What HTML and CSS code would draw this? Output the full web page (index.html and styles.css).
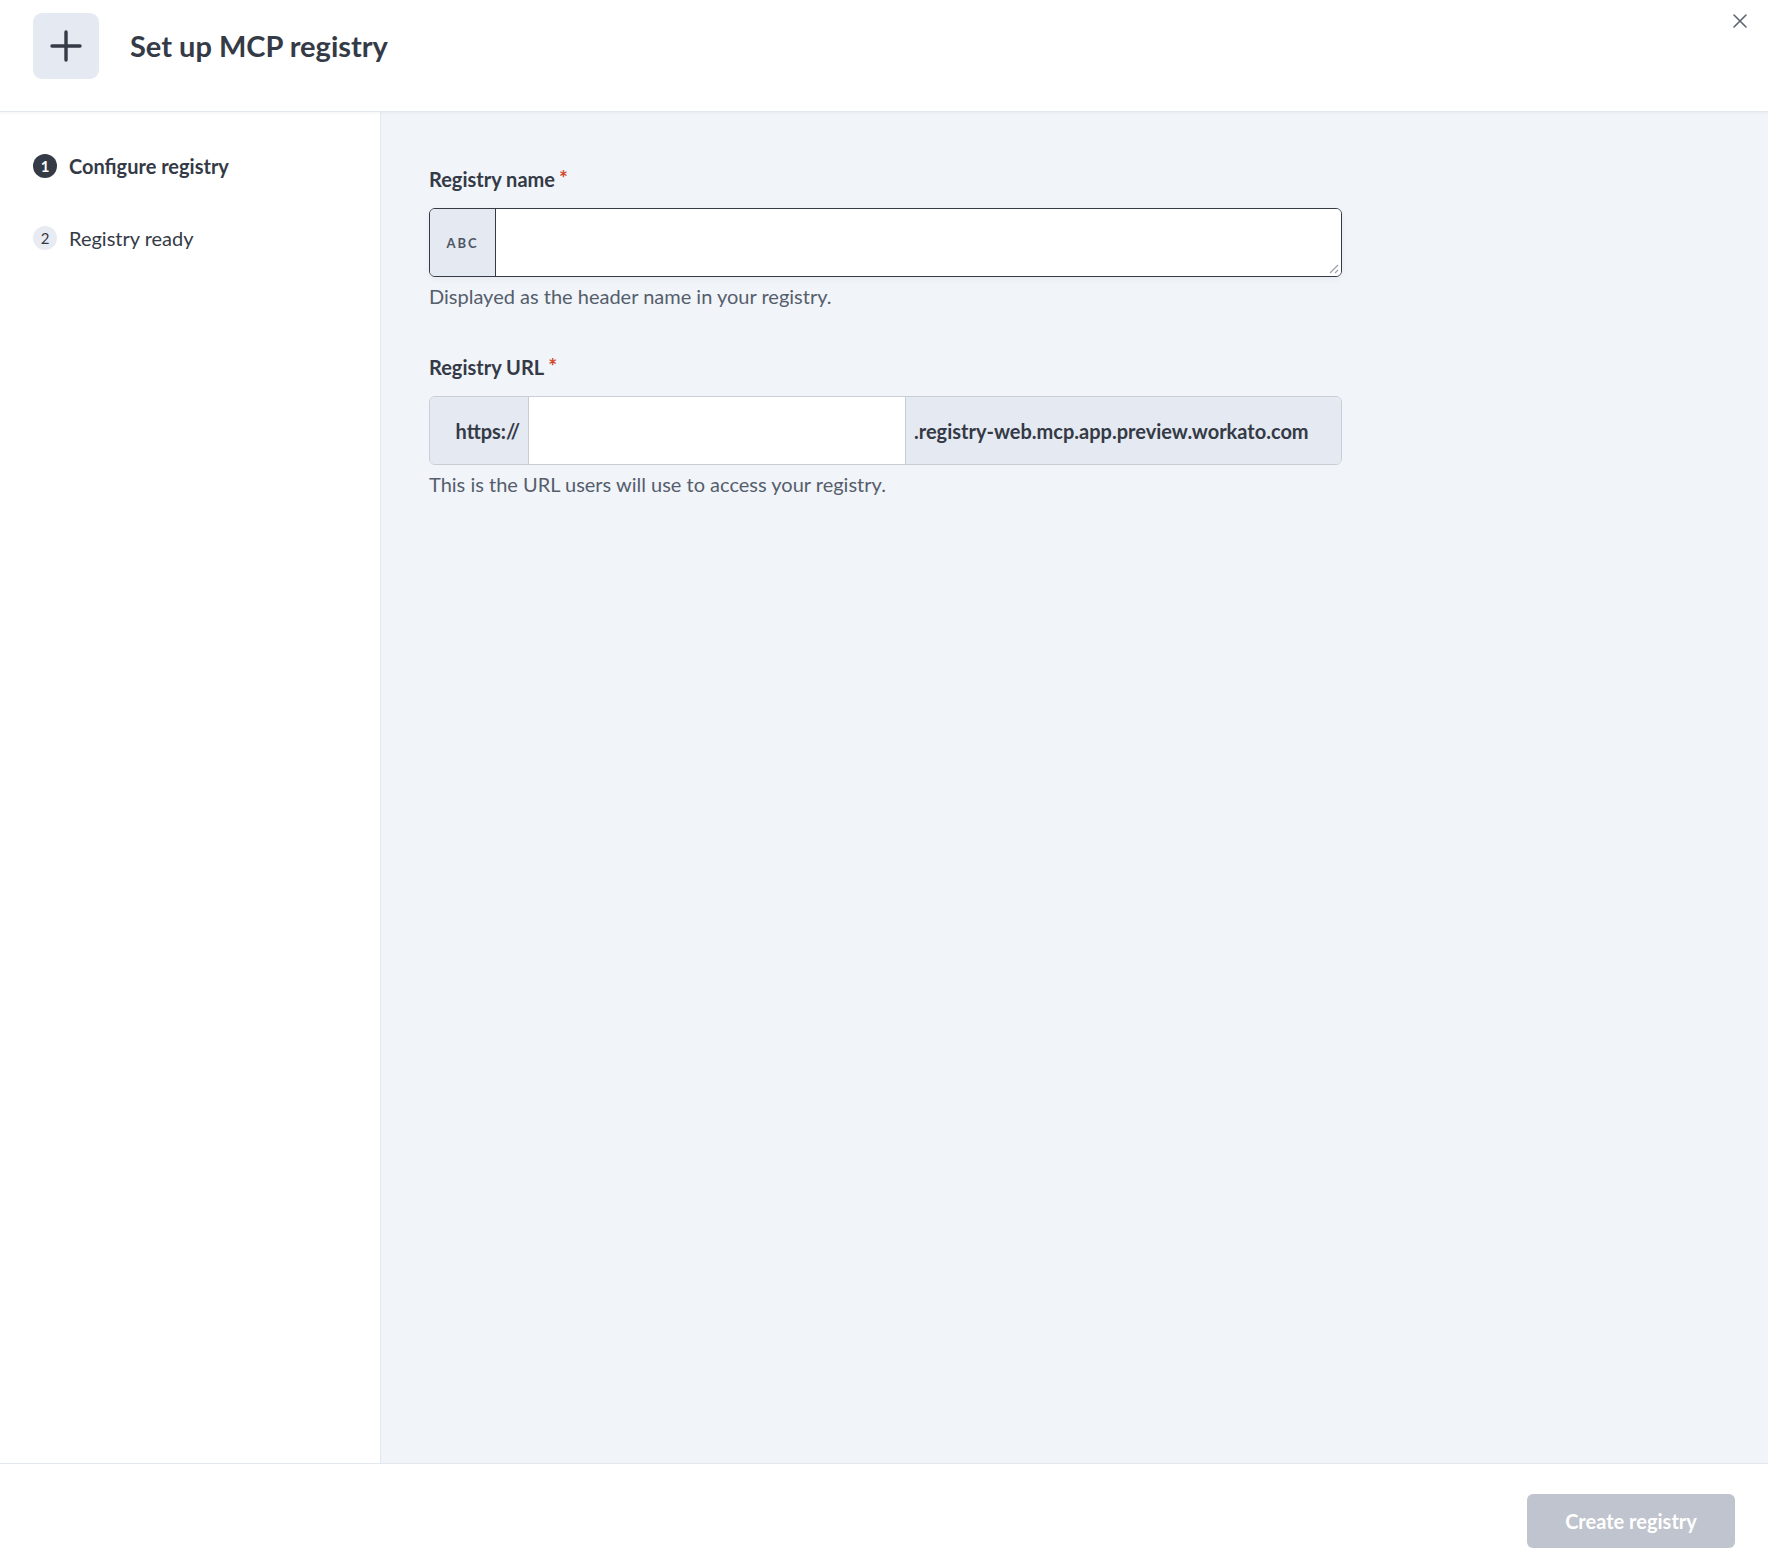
FILE: index.html
```html
<!DOCTYPE html>
<html>
<head>
<meta charset="utf-8">
<link rel="stylesheet" href="styles.css">
</head>
<body>
<div class="page">
  <header class="header">
    <div class="header-icon">
      <svg width="34" height="34" viewBox="0 0 34 34"><path d="M17 3V31M3 17H31" stroke="#343a46" stroke-width="3.4" stroke-linecap="round"/></svg>
    </div>
    <h1 class="title">Set up MCP registry</h1>
    <button class="close" aria-label="Close">
      <svg width="16" height="16" viewBox="0 0 16 16"><path d="M2 2L14 14M14 2L2 14" stroke="#5b6473" stroke-width="1.6" stroke-linecap="round"/></svg>
    </button>
  </header>
  <div class="body">
    <aside class="sidebar">
      <div class="step active"><span class="step-num">1</span><span class="step-label">Configure registry</span></div>
      <div class="step"><span class="step-num">2</span><span class="step-label">Registry ready</span></div>
    </aside>
    <main class="main">
      <div class="field">
        <label class="label">Registry name<span class="req">*</span></label>
        <div class="name-input">
          <div class="abc">ABC</div>
          <div class="name-box">
            <svg class="grip" width="12" height="12" viewBox="0 0 12 12"><path d="M11 3L3 11M11 8L8 11" stroke="#9a9ea6" stroke-width="1.1"/></svg>
          </div>
        </div>
        <div class="hint">Displayed as the header name in your registry.</div>
      </div>
      <div class="field">
        <label class="label">Registry URL<span class="req">*</span></label>
        <div class="url-input">
          <div class="url-prefix">https://</div>
          <div class="url-box"></div>
          <div class="url-suffix">.registry-web.mcp.app.preview.workato.com</div>
        </div>
        <div class="hint">This is the URL users will use to access your registry.</div>
      </div>
    </main>
  </div>
  <footer class="footer">
    <button class="create">Create registry</button>
  </footer>
</div>
</body>
</html>
```
FILE: styles.css
```css
* { box-sizing: border-box; }
html, body { margin: 0; padding: 0; }
body {
  font-family: Lato, "Noto Sans", sans-serif;
  color: #343a46;
  background: #fff;
}
.page {
  width: 1768px;
  height: 1566px;
  display: flex;
  flex-direction: column;
}
.header {
  height: 112px;
  flex: none;
  display: flex;
  align-items: flex-start;
  padding: 13px 0 0 33px;
  border-bottom: 1px solid #e3e7ee;
  box-shadow: 0 1px 3px rgba(30, 40, 60, 0.05);
  position: relative;
  z-index: 1;
}
.header-icon {
  width: 66px;
  height: 66px;
  border-radius: 9px;
  background: #e5e9f1;
  display: flex;
  align-items: center;
  justify-content: center;
}
.title {
  margin: 0 0 0 31px;
  font-size: 29px;
  font-weight: 700;
  line-height: 66px;
  color: #343a46;
}
.close {
  position: absolute;
  right: 20px;
  top: 13px;
  border: 0;
  background: none;
  padding: 0;
  width: 16px;
  height: 16px;
  display: flex;
}
.body {
  flex: 1;
  display: flex;
  min-height: 0;
}
.sidebar {
  width: 381px;
  flex: none;
  border-right: 1px solid #e3e7ee;
  padding: 42px 0 0 33px;
  display: flex;
  flex-direction: column;
  gap: 48px;
}
.step {
  display: flex;
  align-items: center;
  gap: 12px;
  height: 24px;
  font-size: 20px;
}
.step-num {
  width: 24px;
  height: 24px;
  border-radius: 50%;
  background: #e8ebf1;
  color: #343a46;
  font-size: 15px;
  display: flex;
  align-items: center;
  justify-content: center;
}
.step.active .step-num {
  background: #343a46;
  color: #fff;
  font-weight: 700;
}
.step.active .step-label { font-weight: 700; }
.main {
  flex: 1;
  background: #f1f4f9;
  padding: 51px 0 0 48px;
  display: flex;
  flex-direction: column;
  gap: 41px;
}
.field {
  width: 913px;
  display: flex;
  flex-direction: column;
}
.label {
  font-size: 20px;
  font-weight: 700;
  line-height: 30px;
  margin-bottom: 14px;
}
.req {
  color: #d2462a;
  margin-left: 4px;
  font-size: 21px;
  vertical-align: 1px;
}
.name-input {
  height: 69px;
  display: flex;
  border: 1px solid #343a46;
  border-radius: 6px;
  overflow: hidden;
  box-shadow: 0 2px 6px rgba(30, 40, 60, 0.05);
}
.abc {
  width: 66px;
  flex: none;
  background: #e5e9f1;
  border-right: 1px solid #343a46;
  display: flex;
  align-items: center;
  justify-content: center;
  font-size: 13px;
  font-weight: 700;
  letter-spacing: 2px;
  color: #4d5563;
}
.name-box {
  flex: 1;
  background: #fff;
  position: relative;
}
.grip {
  position: absolute;
  right: 2px;
  bottom: 2px;
}
.hint {
  margin-top: 5px;
  font-size: 20px;
  line-height: 28px;
  color: #555e6c;
}
.url-input {
  height: 69px;
  display: flex;
  border: 1px solid #c9cdd5;
  border-radius: 6px;
  overflow: hidden;
}
.url-prefix {
  width: 99px;
  flex: none;
  background: #e5e9f1;
  border-right: 1px solid #c9cdd5;
  display: flex;
  align-items: center;
  justify-content: flex-end;
  padding-right: 8px;
  font-size: 20px;
  font-weight: 700;
}
.url-box {
  flex: 1;
  background: #fff;
}
.url-suffix {
  width: 436px;
  flex: none;
  background: #e5e9f1;
  border-left: 1px solid #c9cdd5;
  display: flex;
  align-items: center;
  padding-left: 8px;
  font-size: 20px;
  font-weight: 700;
}
.footer {
  height: 103px;
  flex: none;
  border-top: 1px solid #e3e7ee;
  display: flex;
  justify-content: flex-end;
  padding: 30px 33px 0 0;
}
.create {
  width: 208px;
  height: 54px;
  border: 0;
  border-radius: 6px;
  background: #c0c4ce;
  color: #fff;
  font-family: inherit;
  font-size: 20px;
  font-weight: 700;
}
```
